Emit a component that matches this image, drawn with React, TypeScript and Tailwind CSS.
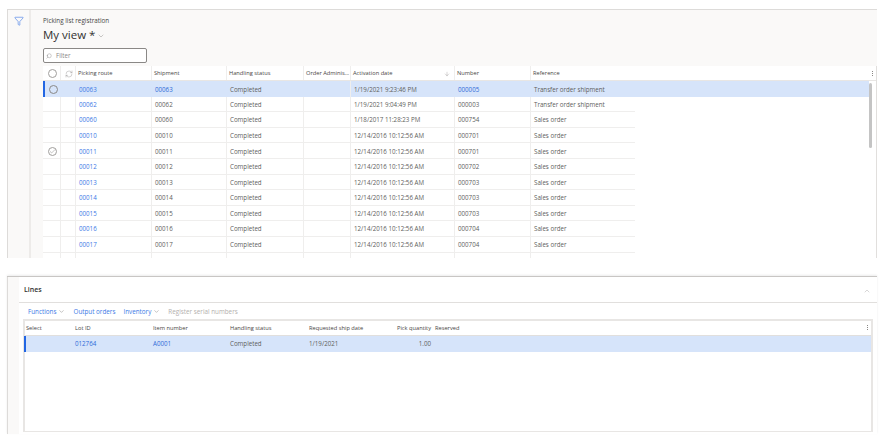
import { ChevronDown, ChevronUp, Funnel, RefreshCw, Search, Check, ArrowDown } from 'lucide-react';

const routes = [
  { route: '00063', date: '1/19/2021 9:23:46 PM', number: '000005', reference: 'Transfer order shipment' },
  { route: '00062', date: '1/19/2021 9:04:49 PM', number: '000003', reference: 'Transfer order shipment' },
  { route: '00060', date: '1/18/2017 11:28:23 PM', number: '000754', reference: 'Sales order' },
  { route: '00010', date: '12/14/2016 10:12:56 AM', number: '000701', reference: 'Sales order' },
  { route: '00011', date: '12/14/2016 10:12:56 AM', number: '000701', reference: 'Sales order' },
  { route: '00012', date: '12/14/2016 10:12:56 AM', number: '000702', reference: 'Sales order' },
  { route: '00013', date: '12/14/2016 10:12:56 AM', number: '000703', reference: 'Sales order' },
  { route: '00014', date: '12/14/2016 10:12:56 AM', number: '000703', reference: 'Sales order' },
  { route: '00015', date: '12/14/2016 10:12:56 AM', number: '000703', reference: 'Sales order' },
  { route: '00016', date: '12/14/2016 10:12:56 AM', number: '000704', reference: 'Sales order' },
  { route: '00017', date: '12/14/2016 10:12:56 AM', number: '000704', reference: 'Sales order' },
];

const cell = 'h-full shrink-0 flex items-center border-r border-[#efeeed] pl-[2px] pt-[1px] overflow-hidden whitespace-nowrap';

function Dots() {
  return (
    <div className="flex flex-col gap-[1px]">
      <span className="w-[1px] h-[1px] bg-[#8a8886]" />
      <span className="w-[1px] h-[1px] bg-[#8a8886]" />
      <span className="w-[1px] h-[1px] bg-[#8a8886]" />
    </div>
  );
}

function PickingRow({ row, index }: { row: (typeof routes)[number]; index: number }) {
  const selected = index === 0;
  return (
    <div className={`flex h-[15.6px] items-center text-[#605e5c] ${selected ? 'w-[826px] bg-[#d6e4fa]' : 'w-[592px] border-b border-[#efeeed]'}`}>
      <div className={`${cell} w-[18px] justify-center pl-0 ${selected ? 'border-l-2 border-l-[#2266e3] border-r-0 pr-[2px]' : ''}`}>
        {selected && <span className="w-[9px] h-[9px] rounded-full border border-[#8a8886]" />}
        {index === 4 && (
          <span className="w-[9px] h-[9px] rounded-full border border-[#a19f9d] flex items-center justify-center">
            <Check size={7} strokeWidth={1.25} className="text-[#605e5c]" />
          </span>
        )}
      </div>
      <div className={`${cell} w-[15px] ${selected ? 'border-r-0' : ''}`} />
      <div className={`${cell} w-[76px] text-[#3b79e6] ${selected ? 'border-r-0 text-[#2f6bd8]' : ''}`}>
        <span className="pl-[1px]">{row.route}</span>
      </div>
      <div className={`${cell} w-[75px] ${selected ? 'text-[#2f6bd8] border-r-0' : ''}`}>
        <span className="pl-[1px]">{row.route}</span>
      </div>
      <div className={`${cell} w-[77px] ${selected ? 'border-r-0' : ''}`}>
        <span className="pl-[1px]">Completed</span>
      </div>
      <div className={`${cell} w-[47px]`} />
      <div className={`${cell} w-[104px] ${selected ? 'border-r-0' : ''}`}>
        <span className="pl-[1px]">{row.date}</span>
      </div>
      <div className={`${cell} w-[76px] ${selected ? 'text-[#2f6bd8] border-r-0' : ''}`}>
        <span className="pl-[1px]">{row.number}</span>
      </div>
      <div className="pl-[2px] pt-[1px] whitespace-nowrap">
        <span className="pl-[1px]">{row.reference}</span>
      </div>
    </div>
  );
}

function PickingGrid() {
  return (
    <div className="flex-1 min-h-0 bg-white border-r border-[#e1dfdd] text-[6.2px] overflow-hidden">
      <div className="flex h-[15px] items-center border-b border-[#e8e6e4] text-[5.7px] text-[#484644]">
        <div className={`${cell} w-[18px] justify-center pl-0 pt-0`}>
          <span className="w-[9px] h-[9px] rounded-full border border-[#a19f9d]" />
        </div>
        <div className={`${cell} w-[15px] justify-center pl-0 pt-0`}>
          <RefreshCw size={8} strokeWidth={1} className="text-[#797775]" />
        </div>
        <div className={`${cell} w-[76px]`}>Picking route</div>
        <div className={`${cell} w-[75px]`}>Shipment</div>
        <div className={`${cell} w-[77px]`}>Handling status</div>
        <div className={`${cell} w-[47px]`}>Order Adminis...</div>
        <div className={`${cell} w-[104px] justify-between pr-[4px]`}>
          <span>Activation date</span>
          <ArrowDown size={6} strokeWidth={1} className="text-[#605e5c]" />
        </div>
        <div className={`${cell} w-[76px]`}>Number</div>
        <div className="pl-[2px] pt-[1px]">Reference</div>
        <div className="ml-auto pr-[3px]">
          <Dots />
        </div>
      </div>
      <div className="flex">
        <div className="flex-1 min-w-0">
          {routes.map((row, i) => (
            <PickingRow key={row.route} row={row} index={i} />
          ))}
          <div className="flex h-[8px] w-[592px]">
            <div className={`${cell} w-[18px]`} />
            <div className={`${cell} w-[15px]`} />
            <div className={`${cell} w-[76px]`} />
            <div className={`${cell} w-[75px]`} />
            <div className={`${cell} w-[77px]`} />
            <div className={`${cell} w-[47px]`} />
            <div className={`${cell} w-[104px]`} />
            <div className={`${cell} w-[76px]`} />
          </div>
        </div>
        <div className="w-[7px] shrink-0 pt-[2px]">
          <div className="w-[3px] h-[65px] rounded-full bg-[#c4c4c4]" />
        </div>
      </div>
    </div>
  );
}

function LinesTable() {
  return (
    <div className="ml-[4px] w-[850px] h-[112.5px] border-2 border-b border-[#e8e6e4] text-[6.2px] bg-white">
      <div className="grid grid-cols-[50px_78px_77px_79px_96px_26px_1fr] items-center h-[15px] border-b border-[#e1dfdd] text-[5.7px] text-[#484644] whitespace-nowrap">
        <span className="pl-[1px]">Select</span>
        <span>Lot ID</span>
        <span>Item number</span>
        <span>Handling status</span>
        <span>Requested ship date</span>
        <span className="col-span-2 flex items-center">
          <span className="-ml-[9px] w-[35px] text-right">Pick quantity</span>
          <span className="ml-[4px]">Reserved</span>
          <span className="ml-auto pr-[3px]">
            <Dots />
          </span>
        </span>
      </div>
      <div className="grid grid-cols-[49px_78px_77px_79px_96px_26px_1fr] items-center h-[16px] bg-[#d6e4fa] border-l-2 border-[#2266e3] -ml-[1px] text-[#605e5c]">
        <span />
        <span className="text-[#2f6bd8]">012764</span>
        <span className="text-[#2f6bd8]">A0001</span>
        <span>Completed</span>
        <span>1/19/2021</span>
        <span className="text-right">1.00</span>
        <span />
      </div>
    </div>
  );
}

export default function App() {
  return (
    <div className="w-[887px] h-[440px] bg-white overflow-hidden pt-[9px] pl-[7px] font-['Open_Sans','Noto_Sans',sans-serif]">
      <section className="flex w-[870px] h-[249px] border-l border-t border-[#dddbd9] bg-[#faf9f8]">
        <div className="w-[23px] shrink-0 border-r-2 border-[#edebe9] flex justify-center pt-[6px]">
          <Funnel size={10} strokeWidth={1.25} className="text-[#2266e3]" />
        </div>
        <div className="flex-1 min-w-0 flex flex-col pl-[12px]">
          <div className="mt-[6px] text-[6.3px] leading-[9px] text-[#484644]">Picking list registration</div>
          <div className="mt-[1px] flex items-center text-[11.5px] leading-[18px] text-[#323130]">
            <span>My view *</span>
            <ChevronDown size={8} strokeWidth={1} className="ml-[2px] mt-[2px] text-[#605e5c]" />
          </div>
          <div className="mt-[4px] w-[104px] h-[15px] shrink-0 flex items-center gap-[4px] bg-white border border-[#8a8886] rounded-[2px] pl-[2px] text-[6.2px] text-[#8a8886]">
            <Search size={6} strokeWidth={1.25} className="-scale-x-100 text-[#605e5c]" />
            <span>Filter</span>
          </div>
          <div className="mt-[3px] flex-1 min-h-0 flex flex-col">
            <PickingGrid />
          </div>
        </div>
      </section>

      <section className="mt-[18px] flex w-[870px] h-[158px] border-t border-[#c8c6c4] shadow-[0_-1px_2px_rgba(0,0,0,0.08)]">
        <div className="w-[12px] shrink-0 bg-[#faf9f8] border-l border-[#dddbd9]" />
        <div className="flex-1 min-w-0 bg-white">
          <div className="h-[26px] flex items-center justify-between border-b border-[#e1dfdd] pl-[5px] pr-[6px] pt-[2px]">
            <span className="text-[7px] font-semibold text-[#323130]">Lines</span>
            <ChevronUp size={8} strokeWidth={1.25} className="text-[#a19f9d]" />
          </div>
          <div className="h-[16px] flex items-center pl-[9px] pt-[1px] text-[6.3px] text-[#3b79e6]">
            <span>Functions</span>
            <ChevronDown size={7} strokeWidth={1.25} className="ml-[2px] text-[#605e5c]" />
            <span className="ml-[8px]">Output orders</span>
            <span className="ml-[8px]">Inventory</span>
            <ChevronDown size={7} strokeWidth={1.25} className="ml-[2px] text-[#605e5c]" />
            <span className="ml-[8px] text-[#b3b0ad]">Register serial numbers</span>
          </div>
          <LinesTable />
        </div>
      </section>
    </div>
  );
}
